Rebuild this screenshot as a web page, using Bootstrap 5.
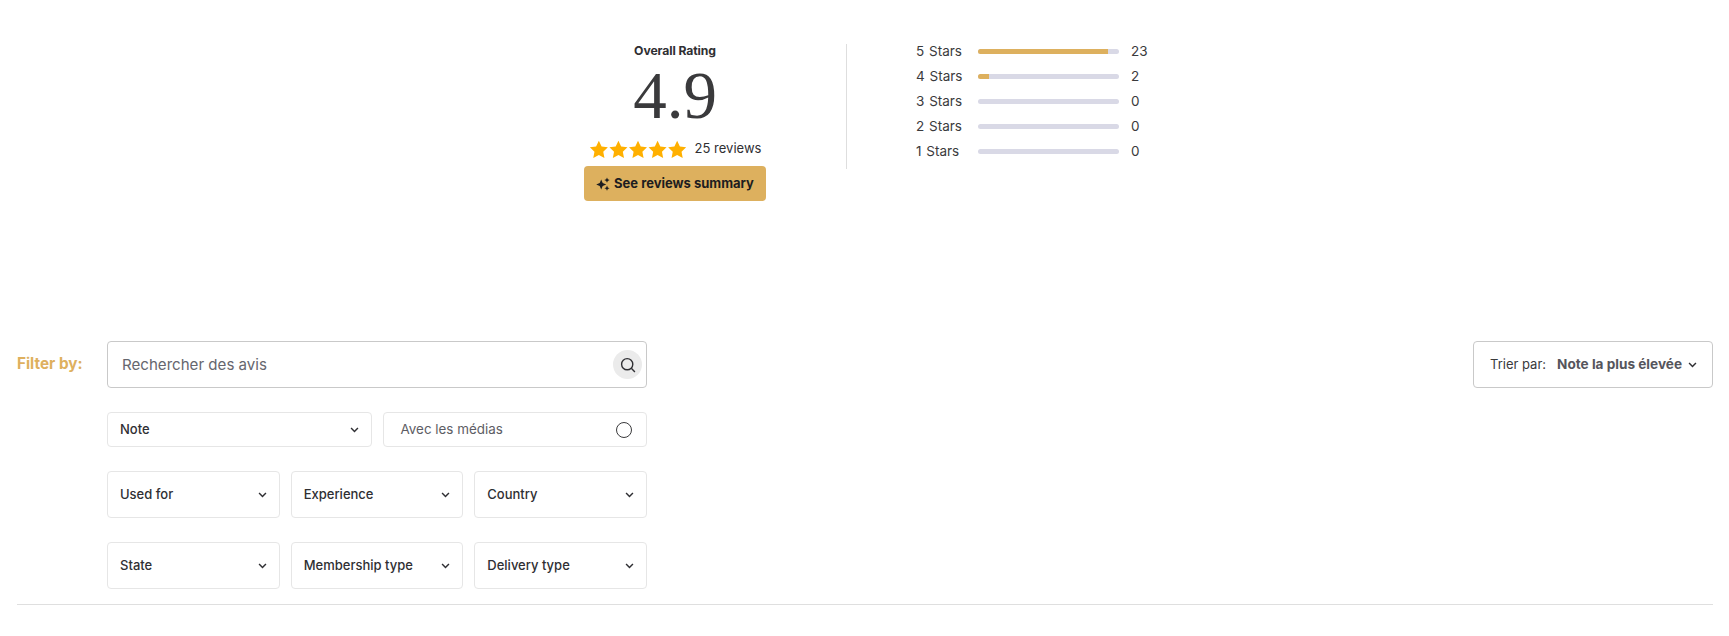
<!DOCTYPE html>
<html lang="en"><head><meta charset="utf-8"><title>Reviews</title>
<link href="https://cdn.jsdelivr.net/npm/bootstrap@5.3.0/dist/css/bootstrap.min.css" rel="stylesheet">
<style>
body{font-family:"Inter","Liberation Sans",sans-serif;color:#2f2f33;background:#fff;font-size:14px}
.rv-page{padding:0 16px 0 17px}
.rv-summary{padding-top:44px;height:341px;margin-left:567px}
.rv-left{width:262px}
.rv-left-in{width:182px}
.rv-title{font-size:12.2px;font-weight:700;line-height:14px;letter-spacing:-.1px}
.rv-score{font-family:"Liberation Serif",serif;font-weight:400;font-size:67px;line-height:70px;margin-top:2px;color:#3a3a3c;height:72px}
.rv-stars{margin-top:6px;height:22px;font-size:13px;gap:8px}
.rv-stars svg{width:98px;height:18.6px;display:block}
.rv-cta{margin-top:6px;width:182px;height:35px;background:#ddb05e;border:0;border-radius:4px;font-size:13px;font-weight:700;color:#1d1d20;padding:0;gap:4px}
.rv-cta:hover{background:#ddb05e;color:#1d1d20}
.rv-div{width:1px;height:125px;background:#dedede;margin-right:69px}
.rv-right{margin-top:-2px}
.rv-line{height:25px;font-size:13.5px;line-height:18px}
.rv-lab{width:62px;color:#3a3a3c;word-spacing:1px}
.rv-bar{width:141px;height:4.5px;margin-top:7px;background:#d9d9e6;border-radius:3px;overflow:hidden}
.rv-bar.progress{--bs-progress-bar-bg:#ddb05e}
.rv-cnt{margin-left:12px;color:#3a3a3c}
.rv-filter{width:1696px}
.rv-fl-lab{width:90px;color:#deb05e;font-weight:700;font-size:15.3px;height:47px}
.rv-col{width:540px}
.rv-search{height:47px;border:1px solid #c9c9c9;border-radius:4px;padding:1px 4px 0 14px;color:#66666e;font-size:15.1px}
.rv-sicon{width:29px;height:29px;border-radius:50%;background:#ebebeb;margin-top:-1px}
.rv-box{border:1px solid #e6e6e6;border-radius:4px;padding:0 12px;font-size:13px;font-weight:500;color:#2f2f33;background:#fff;min-width:0}
.rv-h47{height:47px}.rv-h35{height:35px}
.rv-media{font-weight:400;font-size:13.4px;color:#5d5d64;padding:0 14px 0 17px}
.rv-radio{width:16px;height:16px;border:1px solid #3a3a3c;border-radius:50%}
.rv-g2,.rv-g3{gap:11px;margin-top:24px}
.rv-g2{grid-template-columns:repeat(2,1fr)}
.rv-g3{grid-template-columns:repeat(3,1fr)}
.rv-sort{width:240px;height:47px;border:1px solid #c9c9c9;border-radius:4px;font-size:13px;padding:0 0 0 16px;color:#3a3a3c;white-space:nowrap}
.rv-sort b{margin-left:11px;font-size:13.6px;font-weight:700;color:#55555c;margin-right:6px}
.rv-hr{margin:15px 0 0;border:0;border-top:1px solid #dfdfdf;opacity:1}
.rv-chev{width:9px;height:6px;flex:none}
</style></head>
<body>
<div class="rv-page">
 <section class="rv-summary d-flex align-items-start">
  <div class="rv-left">
   <div class="rv-left-in text-center">
    <div class="rv-title">Overall Rating</div>
    <div class="rv-score">4.9</div>
    <div class="rv-stars d-flex align-items-center justify-content-center">
     <svg viewBox="0 0 100 19" fill="#ffb000" aria-hidden="true">
      <path d="M10 .8l2.8 5.9 6.4.8-4.7 4.4 1.2 6.4L10 15.2l-5.7 3.1 1.2-6.4L.8 7.5l6.4-.8z"/>
      <path transform="translate(20)" d="M10 .8l2.8 5.9 6.4.8-4.7 4.4 1.2 6.4L10 15.2l-5.7 3.1 1.2-6.4L.8 7.5l6.4-.8z"/>
      <path transform="translate(40)" d="M10 .8l2.8 5.9 6.4.8-4.7 4.4 1.2 6.4L10 15.2l-5.7 3.1 1.2-6.4L.8 7.5l6.4-.8z"/>
      <path transform="translate(60)" d="M10 .8l2.8 5.9 6.4.8-4.7 4.4 1.2 6.4L10 15.2l-5.7 3.1 1.2-6.4L.8 7.5l6.4-.8z"/>
      <path transform="translate(80)" d="M10 .8l2.8 5.9 6.4.8-4.7 4.4 1.2 6.4L10 15.2l-5.7 3.1 1.2-6.4L.8 7.5l6.4-.8z"/>
     </svg>
     <span>25 reviews</span>
    </div>
    <button type="button" class="btn rv-cta d-flex align-items-center justify-content-center">
     <svg width="14" height="14" viewBox="0 0 14 14" fill="#1d1d20" aria-hidden="true"><path d="M5.2 2.4l1.5 3.6 3.5 1.5-3.5 1.5-1.5 3.6-1.5-3.6L.2 7.5l3.5-1.5z"/><path d="M11 .4l.8 1.9 1.9.8-1.9.8-.8 1.9-.8-1.9-1.9-.8 1.9-.8z"/><path d="M11 8.6l.8 1.8 1.8.8-1.8.8-.8 1.8-.8-1.8-1.8-.8 1.8-.8z"/></svg>
     See reviews summary
    </button>
   </div>
  </div>
  <div class="rv-div"></div>
  <div class="rv-right">
   <div class="rv-line d-flex align-items-start"><span class="rv-lab">5 Stars</span><div class="progress rv-bar"><div class="progress-bar" style="width:92%"></div></div><span class="rv-cnt">23</span></div>
   <div class="rv-line d-flex align-items-start"><span class="rv-lab">4 Stars</span><div class="progress rv-bar"><div class="progress-bar" style="width:8%"></div></div><span class="rv-cnt">2</span></div>
   <div class="rv-line d-flex align-items-start"><span class="rv-lab">3 Stars</span><div class="progress rv-bar"><div class="progress-bar" style="width:0%"></div></div><span class="rv-cnt">0</span></div>
   <div class="rv-line d-flex align-items-start"><span class="rv-lab">2 Stars</span><div class="progress rv-bar"><div class="progress-bar" style="width:0%"></div></div><span class="rv-cnt">0</span></div>
   <div class="rv-line d-flex align-items-start"><span class="rv-lab">1 Stars</span><div class="progress rv-bar"><div class="progress-bar" style="width:0%"></div></div><span class="rv-cnt">0</span></div>
  </div>
 </section>
 <section class="rv-filter d-flex align-items-start justify-content-between">
  <div class="d-flex align-items-start">
   <div class="rv-fl-lab d-flex align-items-center">Filter by:</div>
   <div class="rv-col">
    <div class="rv-search d-flex align-items-center justify-content-between">
     <span>Rechercher des avis</span>
     <span class="rv-sicon d-flex align-items-center justify-content-center"><svg width="16" height="16" viewBox="0 0 16 16" fill="none" stroke="#2f2f33" stroke-width="1.4" aria-hidden="true"><circle cx="7.2" cy="7.2" r="5.6"/><path d="M11.3 11.3l3.6 3.6"/></svg></span>
    </div>
    <div class="d-grid rv-g2">
     <div class="rv-box rv-h35 d-flex align-items-center justify-content-between"><span>Note</span><svg class="rv-chev" viewBox="0 0 10 7" fill="none" stroke="#2f2f33" stroke-width="1.7" aria-hidden="true"><path d="M1 1.2l4 4 4-4"/></svg></div>
     <div class="rv-box rv-media rv-h35 d-flex align-items-center justify-content-between"><span>Avec les médias</span><span class="rv-radio"></span></div>
    </div>
    <div class="d-grid rv-g3">
     <div class="rv-box rv-h47 d-flex align-items-center justify-content-between"><span>Used for</span><svg class="rv-chev" viewBox="0 0 10 7" fill="none" stroke="#2f2f33" stroke-width="1.7" aria-hidden="true"><path d="M1 1.2l4 4 4-4"/></svg></div>
     <div class="rv-box rv-h47 d-flex align-items-center justify-content-between"><span>Experience</span><svg class="rv-chev" viewBox="0 0 10 7" fill="none" stroke="#2f2f33" stroke-width="1.7" aria-hidden="true"><path d="M1 1.2l4 4 4-4"/></svg></div>
     <div class="rv-box rv-h47 d-flex align-items-center justify-content-between"><span>Country</span><svg class="rv-chev" viewBox="0 0 10 7" fill="none" stroke="#2f2f33" stroke-width="1.7" aria-hidden="true"><path d="M1 1.2l4 4 4-4"/></svg></div>
    </div>
    <div class="d-grid rv-g3">
     <div class="rv-box rv-h47 d-flex align-items-center justify-content-between"><span>State</span><svg class="rv-chev" viewBox="0 0 10 7" fill="none" stroke="#2f2f33" stroke-width="1.7" aria-hidden="true"><path d="M1 1.2l4 4 4-4"/></svg></div>
     <div class="rv-box rv-h47 d-flex align-items-center justify-content-between"><span>Membership type</span><svg class="rv-chev" viewBox="0 0 10 7" fill="none" stroke="#2f2f33" stroke-width="1.7" aria-hidden="true"><path d="M1 1.2l4 4 4-4"/></svg></div>
     <div class="rv-box rv-h47 d-flex align-items-center justify-content-between"><span>Delivery type</span><svg class="rv-chev" viewBox="0 0 10 7" fill="none" stroke="#2f2f33" stroke-width="1.7" aria-hidden="true"><path d="M1 1.2l4 4 4-4"/></svg></div>
    </div>
   </div>
  </div>
  <div class="rv-sort d-flex align-items-center"><span>Trier par:</span><b>Note la plus élevée</b><svg class="rv-chev" viewBox="0 0 10 7" fill="none" stroke="#2f2f33" stroke-width="1.7" aria-hidden="true"><path d="M1 1.2l4 4 4-4"/></svg></div>
 </section>
 <hr class="rv-hr">
</div>
<script src="https://cdn.jsdelivr.net/npm/bootstrap@5.3.0/dist/js/bootstrap.bundle.min.js"></script>
</body></html>
